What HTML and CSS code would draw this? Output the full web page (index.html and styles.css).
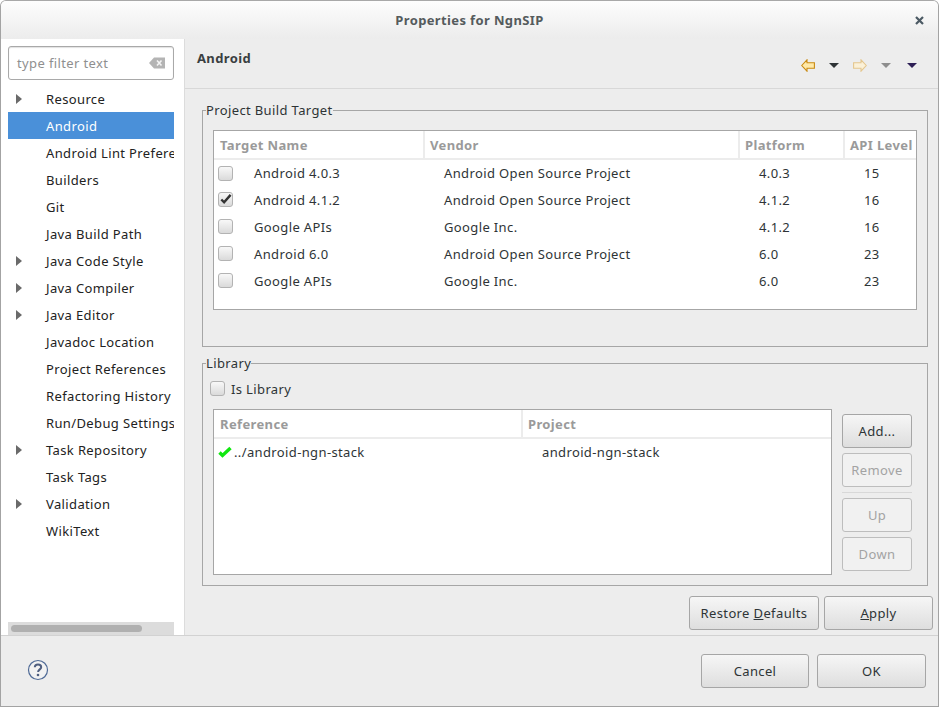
FILE: index.html
```html
<!DOCTYPE html>
<html>
<head>
  <title>Properties for NgnSIP</title>
  <meta charset="utf-8" />
  <link rel="stylesheet" href="styles.css">
</head>
<body>
  <div class="window">
    <div class="titlebar">
      <span class="title">Properties for NgnSIP</span>
      <svg class="close" width="9" height="9" viewBox="0 0 9 9"><path d="M1 1l7 7M8 1l-7 7" stroke="#4c5a64" stroke-width="2.2" fill="none"/></svg>
    </div>

    <div class="main">
      <div class="sidebar">
        <div class="search">
          <span class="search-text">type filter text</span>
          <svg width="16" height="12" viewBox="0 0 16 12"><path d="M5 0.5H16V11.5H5L0 6z" fill="#b4b4b4"/><path d="M8 3.5l4.500 5M12.500 3.500l-4.500 5" stroke="#f4f4f4" stroke-width="1.600" fill="none"/></svg>
        </div>
        <ul class="tree">
          <li class="branch">Resource</li>
          <li class="selected">Android</li>
          <li>Android Lint Preferences</li>
          <li>Builders</li>
          <li>Git</li>
          <li>Java Build Path</li>
          <li class="branch">Java Code Style</li>
          <li class="branch">Java Compiler</li>
          <li class="branch">Java Editor</li>
          <li>Javadoc Location</li>
          <li>Project References</li>
          <li>Refactoring History</li>
          <li>Run/Debug Settings</li>
          <li class="branch">Task Repository</li>
          <li>Task Tags</li>
          <li class="branch">Validation</li>
          <li>WikiText</li>
        </ul>
        <div class="hscroll"><div class="hscroll-thumb"></div></div>
      </div>

      <div class="content">
        <div class="content-head">
          <h1>Android</h1>
          <div class="nav">
            <svg class="nav-arrow" width="14" height="13" viewBox="0 0 14 13"><path d="M0.700 6.500L6 0.800V3.800H13.400V9.200H6V12.200z" fill="#ffe9a8" stroke="#c98a12" stroke-width="1.100"/></svg>
            <span class="tri"></span>
            <svg class="nav-arrow" width="14" height="13" viewBox="0 0 14 13"><path d="M13.300 6.500L8 0.800V3.800H0.600V9.200H8V12.200z" fill="#fbf1d8" stroke="#e4c68e" stroke-width="1.100"/></svg>
            <span class="tri tri-off"></span>
            <span class="tri tri-menu"></span>
          </div>
        </div>

        <fieldset class="group group-target">
          <legend>Project Build Target</legend>
          <div class="table-box target-box">
            <table class="target-table">
              <colgroup><col class="c1"><col class="c2"><col class="c3"><col class="c4"></colgroup>
              <thead>
                <tr><th>Target Name</th><th>Vendor</th><th>Platform</th><th>API Level</th></tr>
              </thead>
              <tbody>
                <tr><td class="name"><span class="check"></span>Android 4.0.3</td><td>Android Open Source Project</td><td>4.0.3</td><td>15</td></tr>
                <tr><td class="name"><span class="check"><svg width="14" height="13" viewBox="0 0 14 13"><path d="M2.500 6.500L5.500 9.500L12.500 1.500" stroke="#333" stroke-width="2.600" fill="none"/></svg></span>Android 4.1.2</td><td>Android Open Source Project</td><td>4.1.2</td><td>16</td></tr>
                <tr><td class="name"><span class="check"></span>Google APIs</td><td>Google Inc.</td><td>4.1.2</td><td>16</td></tr>
                <tr><td class="name"><span class="check"></span>Android 6.0</td><td>Android Open Source Project</td><td>6.0</td><td>23</td></tr>
                <tr><td class="name"><span class="check"></span>Google APIs</td><td>Google Inc.</td><td>6.0</td><td>23</td></tr>
              </tbody>
            </table>
          </div>
        </fieldset>

        <fieldset class="group group-library">
          <legend>Library</legend>
          <label class="is-library"><span class="check"></span>Is Library</label>
          <div class="library-row">
            <div class="table-box library-box">
              <table class="library-table">
                <colgroup><col class="l1"><col class="l2"></colgroup>
                <thead>
                  <tr><th>Reference</th><th>Project</th></tr>
                </thead>
                <tbody>
                  <tr>
                    <td class="ref"><svg width="14" height="12" viewBox="0 0 14 12"><path d="M1.500 6.500L4.500 9.500L12.500 2" stroke="#10e810" stroke-width="3.400" fill="none"/></svg>../android-ngn-stack</td>
                    <td>android-ngn-stack</td>
                  </tr>
                </tbody>
              </table>
            </div>
            <div class="side-buttons">
              <button class="btn">Add...</button>
              <button class="btn" disabled>Remove</button>
              <div class="side-sep"></div>
              <button class="btn" disabled>Up</button>
              <button class="btn" disabled>Down</button>
            </div>
          </div>
        </fieldset>

        <div class="page-buttons">
          <button class="btn btn-restore">Restore <u>D</u>efaults</button>
          <button class="btn btn-apply"><u>A</u>pply</button>
        </div>
      </div>
    </div>

    <div class="footer">
      <svg class="help" width="22" height="22" viewBox="0 0 22 22">
        <circle cx="11" cy="11" r="9.500" fill="#f2f2f2" stroke="#4f6a96" stroke-width="1.200"/>
        <path d="M7.800 8.300C7.800 6.500 9.200 5.500 11 5.500C12.900 5.500 14.200 6.600 14.200 8.200C14.200 10.300 11.100 10.500 11.100 13" stroke="#4f5f80" stroke-width="2" fill="none"/>
        <circle cx="11" cy="16" r="1.300" fill="#4f5f80"/>
      </svg>
      <div class="footer-buttons">
        <button class="btn btn-cancel">Cancel</button>
        <button class="btn btn-ok">OK</button>
      </div>
    </div>
  </div>
</body>
</html>
```

FILE: styles.css
```css
* {
  box-sizing: border-box;
}

html, body {
  margin: 0;
  padding: 0;
}

body {
  width: 939px;
  height: 707px;
  overflow: hidden;
  background: #fff;
  font-family: "Noto Sans", "Open Sans", sans-serif;
  font-size: 13px;
  letter-spacing: 0.37px;
  color: #2e3436;
}

.window {
  display: flex;
  flex-direction: column;
  height: 707px;
  border: 1px solid #a3a3a3;
  border-top-color: #a8a8a8;
  border-radius: 6px 6px 0 0;
  background: #ededed;
  overflow: hidden;
}

.titlebar {
  display: flex;
  align-items: center;
  justify-content: center;
  height: 38px;
  flex: none;
  position: relative;
  background: linear-gradient(#fdfdfd, #ececec);
}

.title {
  font-weight: 700;
  color: #555b5d;
}

.close {
  position: absolute;
  right: 14px;
  top: 15px;
}

.main {
  display: flex;
  flex: 1;
  min-height: 0;
}

/* left tree */
.sidebar {
  display: flex;
  flex-direction: column;
  width: 184px;
  flex: none;
  padding: 7px 10px 0 7px;
  background: #fff;
  border-right: 1px solid #dcdcdc;
}

.search {
  display: flex;
  align-items: center;
  justify-content: space-between;
  height: 34px;
  flex: none;
  padding: 0 8px 1px 8px;
  border: 1px solid #a9a9a9;
  border-radius: 3px;
  box-shadow: inset 0 1px 1px #e2e2e2;
}

.search-text {
  color: #8f8f8f;
}

.tree {
  flex: 1;
  list-style: none;
  margin: 5px 0 0;
  padding: 0;
  overflow: hidden;
}

.tree li {
  height: 27px;
  line-height: 29px;
  padding-left: 38px;
  white-space: nowrap;
  overflow: hidden;
  color: #222;
  position: relative;
}

.tree .branch::before {
  content: "";
  position: absolute;
  left: 8px;
  top: 9px;
  border-left: 6px solid #6a6a6a;
  border-top: 5px solid transparent;
  border-bottom: 5px solid transparent;
}

.tree .selected {
  background: #4a90d9;
  color: #fff;
}

.hscroll {
  height: 13px;
  flex: none;
  padding: 3px;
  background: #dcdcdc;
}

.hscroll-thumb {
  width: 131px;
  height: 7px;
  border-radius: 4px;
  background: #b0b0b0;
}

/* right side */
.content {
  flex: 1;
  min-width: 0;
}

.content-head {
  display: flex;
  align-items: center;
  justify-content: space-between;
  height: 50px;
  padding: 0 21px 8px 12px;
  border-bottom: 1px solid #d8d8d8;
}

.content-head h1 {
  margin: 0 0 4px;
  font-size: 13px;
  font-weight: 700;
  color: #3a3f41;
}

.nav {
  display: flex;
  align-items: center;
  margin-top: 11px;
}

.nav-arrow {
  margin-right: 14px;
}

.tri {
  width: 0;
  height: 0;
  margin-right: 14px;
  border-left: 5px solid transparent;
  border-right: 5px solid transparent;
  border-top: 5px solid #2e3436;
}

.tri-off {
  margin-right: 16px;
  border-top-color: #8e8e8e;
}

.tri-menu {
  margin-right: 0;
  border-top-color: #2d1f55;
}

.group {
  margin: 12px 10px 0 17px;
  padding: 11px 10px 0;
  border: 1px solid #a6a6a6;
  min-width: 0;
}

.group legend {
  padding: 0;
  margin-left: -7px;
  height: 18px;
  line-height: 18px;
  color: #2e3436;
}

.group-target {
  height: 246px;
}

.group-library {
  height: 232px;
  margin-top: 7px;
  padding-top: 8px;
}

.table-box {
  background: #fff;
  border: 1px solid #a6a6a6;
  overflow: hidden;
}

.target-box {
  width: 704px;
  height: 180px;
}

table {
  table-layout: fixed;
  border-collapse: collapse;
  width: 100%;
}

.c1 { width: 210px; }
.c2 { width: 315px; }
.c3 { width: 105px; }
.c4 { width: 72px; }
.l1 { width: 308px; }
.l2 { width: 309px; }

th {
  height: 28px;
  padding: 0 0 0 5px;
  text-align: left;
  font-weight: 700;
  color: #9a9a9a;
  white-space: nowrap;
  overflow: hidden;
  border-right: 2px solid #ececec;
  border-bottom: 2px solid #ececec;
}

th:first-child {
  padding-left: 6px;
}

th:last-child {
  border-right: 0;
}

td {
  height: 27px;
  padding: 0 0 0 20px;
  color: #2e3436;
  white-space: nowrap;
}

td.name {
  padding-left: 4px;
}

.check {
  display: inline-flex;
  align-items: center;
  justify-content: center;
  width: 15px;
  height: 15px;
  border: 1px solid #b3b3b3;
  border-radius: 3px;
  background: linear-gradient(#f8f8f8, #dadada);
  vertical-align: middle;
}

td.name .check {
  margin: -3px 21px 0 0;
}

.is-library {
  display: flex;
  align-items: center;
  height: 17px;
  margin-left: -3px;
}

.is-library .check {
  margin-right: 6px;
}

.library-row {
  display: flex;
  margin-top: 12px;
}

.library-box {
  width: 619px;
  height: 166px;
}

td.ref {
  padding-left: 4px;
}

td.ref svg {
  margin-right: 2px;
  vertical-align: -1px;
}

.side-buttons {
  display: flex;
  flex-direction: column;
  width: 70px;
  margin: 5px 0 0 10px;
}

.side-buttons .btn {
  margin-bottom: 5px;
}

.side-sep {
  height: 1px;
  margin-bottom: 5px;
  background: #d8d8d8;
}

.btn {
  display: block;
  height: 34px;
  padding: 0;
  border: 1px solid #a6a6a6;
  border-radius: 3px;
  background: linear-gradient(#f6f6f6, #dedede);
  font: inherit;
  letter-spacing: inherit;
  color: #2e3436;
}

.btn:disabled {
  border-color: #bdbdbd;
  background: #f1f1f1;
  color: #a3a3a3;
}

.page-buttons {
  display: flex;
  justify-content: flex-end;
  gap: 5px;
  margin: 10px 5px 0 0;
}

.btn-restore { width: 130px; }
.btn-apply { width: 109px; }

.footer {
  display: flex;
  align-items: center;
  justify-content: space-between;
  height: 71px;
  flex: none;
  padding: 0 12px 0 26px;
  border-top: 1px solid #d2d2d2;
}

.help {
  margin-top: -2px;
}

.footer-buttons {
  display: flex;
  gap: 8px;
}

.btn-cancel { width: 108px; }
.btn-ok { width: 109px; }
```
